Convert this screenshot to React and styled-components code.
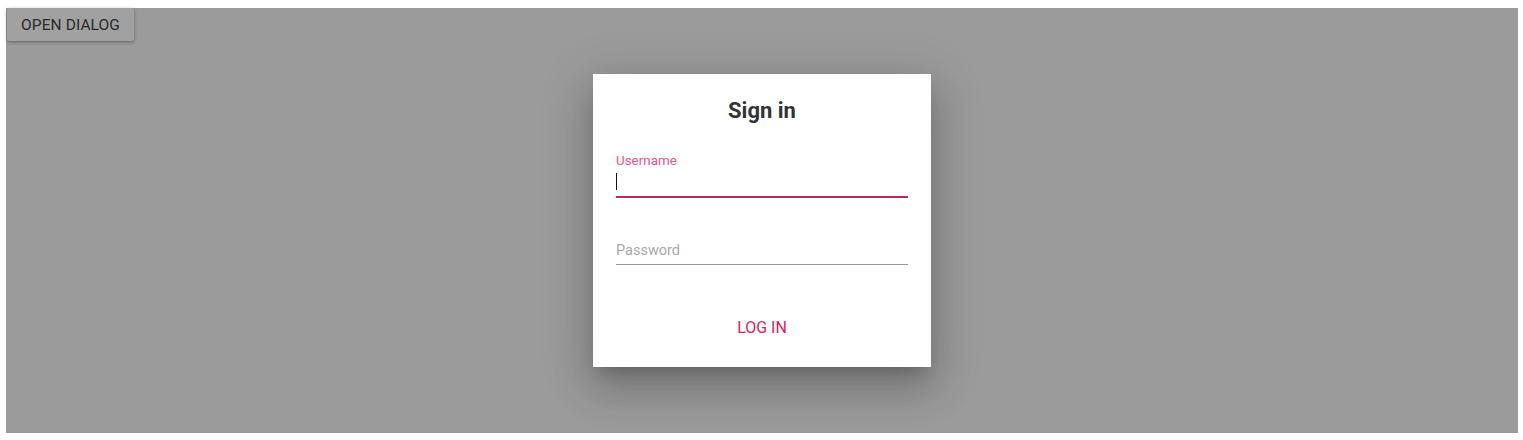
import React from "react";
import styled, { createGlobalStyle } from "styled-components";

const Global = createGlobalStyle`
  html, body { margin: 0; padding: 0; background: #fff; }
  body { font-family: Roboto, "Noto Sans", Arial, sans-serif; }
  * { box-sizing: border-box; }
`;

const Page = styled.div`
  padding: 8px 5px 7px 6px;
  height: 440px;
`;

const Stage = styled.div`
  position: relative;
  height: 425px;
  background: #9b9b9b;
`;

const RaisedButton = styled.button`
  display: inline-flex;
  align-items: center;
  margin-left: 1px;
  height: 33px;
  padding: 0 14px;
  border: none;
  border-radius: 2px;
  background: #a1a1a1;
  color: #2a2a2a;
  font-family: Roboto, sans-serif;
  font-size: 15.5px;
  letter-spacing: 0.1px;
  text-transform: uppercase;
  box-shadow: 0 1px 4px rgba(0, 0, 0, 0.22), 0 1px 2px rgba(0, 0, 0, 0.18);
`;

/* backdrop centring the modal over the page */
const Backdrop = styled.div`
  position: absolute;
  inset: 0;
  display: flex;
  align-items: center;
  justify-content: center;
`;

const Dialog = styled.div`
  width: 338px;
  height: 293px;
  background: #fff;
  padding: 24px 23px 22px;
  display: flex;
  flex-direction: column;
  box-shadow: 0 11px 15px -7px rgba(0, 0, 0, 0.2),
    0 24px 38px 3px rgba(0, 0, 0, 0.14), 0 9px 46px 8px rgba(0, 0, 0, 0.12);
`;

const Title = styled.h2`
  margin: 0 0 31px;
  height: 24px;
  line-height: 26px;
  text-align: center;
  font-size: 22px;
  font-weight: 700;
  color: #333;
`;

const Field = styled.div`
  display: flex;
  flex-direction: column;
  margin-bottom: ${(p) => p.$gap || 0}px;
`;

const Label = styled.div`
  height: 16px;
  line-height: 16px;
  font-size: 13.4px;
  color: ${(p) => (p.$active ? "#e8568b" : "transparent")};
`;

const InputBox = styled.div`
  height: 29px;
  display: flex;
  align-items: center;
  border-bottom: ${(p) => (p.$active ? "2px solid #cc2265" : "1px solid #9a9a9a")};
  font-size: 14.5px;
  color: #a8a8a8;
`;

const Caret = styled.span`
  display: block;
  width: 1px;
  height: 17px;
  background: #111;
  margin-bottom: 3px;
`;

const Actions = styled.div`
  margin-top: auto;
  display: flex;
  justify-content: center;
`;

const FlatButton = styled.button`
  height: 36px;
  padding: 0 16px;
  border: none;
  background: transparent;
  color: #e21a5e;
  font-family: Roboto, sans-serif;
  font-size: 16px;
  text-transform: uppercase;
`;

export default function App() {
  return (
    <>
      <Global />
      <Page>
        <Stage>
          <RaisedButton>Open dialog</RaisedButton>
          <Backdrop>
            <Dialog>
              <Title>Sign in</Title>
              <Field $gap={22}>
                <Label $active>Username</Label>
                <InputBox $active>
                  <Caret />
                </InputBox>
              </Field>
              <Field>
                <Label />
                <InputBox>Password</InputBox>
              </Field>
              <Actions>
                <FlatButton>Log in</FlatButton>
              </Actions>
            </Dialog>
          </Backdrop>
        </Stage>
      </Page>
    </>
  );
}
